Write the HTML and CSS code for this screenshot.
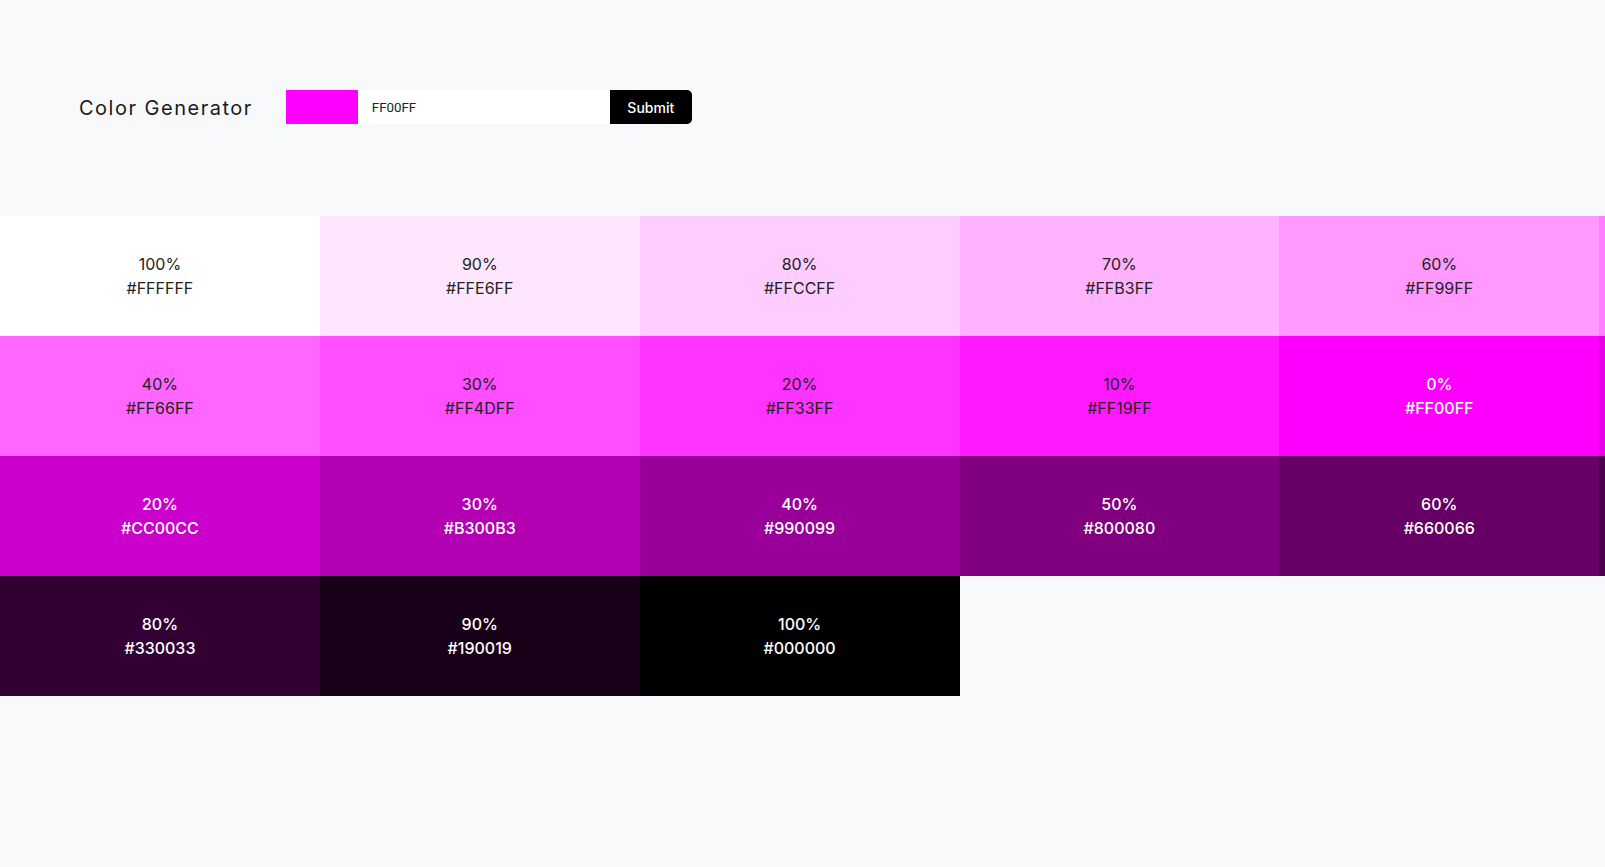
FILE: index.html
```html
<!DOCTYPE html>
<html lang="en">
<head>
<meta charset="utf-8">
<title>Color Generator</title>
<link rel="stylesheet" href="styles.css">
</head>
<body>
<main class="page">
  <section class="generator">
    <h3 class="title">Color Generator</h3>
    <form class="picker">
      <span class="swatch"></span>
      <input class="hex-input" type="text" value="FF00FF">
      <button class="submit" type="button">Submit</button>
    </form>
  </section>
  <section class="colors">
    <article class="color" style="background:#FFFFFF"><p>100%</p><p>#FFFFFF</p></article>
    <article class="color" style="background:#FFE6FF"><p>90%</p><p>#FFE6FF</p></article>
    <article class="color" style="background:#FFCCFF"><p>80%</p><p>#FFCCFF</p></article>
    <article class="color" style="background:#FFB3FF"><p>70%</p><p>#FFB3FF</p></article>
    <article class="color" style="background:#FF99FF"><p>60%</p><p>#FF99FF</p></article>
    <article class="color" style="background:#FF80FF"><p>50%</p><p>#FF80FF</p></article>
    <article class="color" style="background:#FF66FF"><p>40%</p><p>#FF66FF</p></article>
    <article class="color" style="background:#FF4DFF"><p>30%</p><p>#FF4DFF</p></article>
    <article class="color" style="background:#FF33FF"><p>20%</p><p>#FF33FF</p></article>
    <article class="color" style="background:#FF19FF"><p>10%</p><p>#FF19FF</p></article>
    <article class="color light" style="background:#FF00FF"><p>0%</p><p>#FF00FF</p></article>
    <article class="color light" style="background:#E600E6"><p>10%</p><p>#E600E6</p></article>
    <article class="color light" style="background:#CC00CC"><p>20%</p><p>#CC00CC</p></article>
    <article class="color light" style="background:#B300B3"><p>30%</p><p>#B300B3</p></article>
    <article class="color light" style="background:#990099"><p>40%</p><p>#990099</p></article>
    <article class="color light" style="background:#800080"><p>50%</p><p>#800080</p></article>
    <article class="color light" style="background:#660066"><p>60%</p><p>#660066</p></article>
    <article class="color light" style="background:#4D004D"><p>70%</p><p>#4D004D</p></article>
    <article class="color light" style="background:#330033"><p>80%</p><p>#330033</p></article>
    <article class="color light" style="background:#190019"><p>90%</p><p>#190019</p></article>
    <article class="color light" style="background:#000000"><p>100%</p><p>#000000</p></article>
  </section>
</main>
</body>
</html>
```

FILE: styles.css
```css
* {
  box-sizing: border-box;
}

html, body {
  margin: 0;
  padding: 0;
}

body {
  background: #f8f9fb;
  color: #222;
  font-family: "Inter", "Open Sans", sans-serif;
  overflow: hidden;
}

.page {
  width: 100%;
  overflow: hidden;
}

.generator {
  display: flex;
  align-items: flex-start;
  padding: 90px 0 0 79px;
  height: 216px;
}

.title {
  margin: 1px 33px 0 0;
  font-size: 20px;
  font-weight: 400;
  letter-spacing: 1.5px;
  line-height: 34px;
  color: #1a1a1a;
}

.picker {
  display: flex;
  height: 34px;
}

.swatch {
  width: 72px;
  height: 34px;
  background: #ff00ff;
}

.hex-input {
  width: 252px;
  height: 34px;
  border: none;
  outline: none;
  background: #fff;
  padding: 0 14px;
  font-family: "Roboto", sans-serif;
  font-size: 13.33px;
  color: #222;
}

.submit {
  width: 82px;
  height: 34px;
  border: none;
  background: #000;
  color: #fff;
  font-family: "Inter", sans-serif;
  font-size: 14px;
  font-weight: 500;
  border-radius: 0 5px 5px 0;
  padding: 0;
}

.colors {
  display: grid;
  grid-template-columns: repeat(6, 1fr);
  grid-auto-rows: 120px;
  width: 1919px;
}

.color {
  display: flex;
  flex-direction: column;
  align-items: center;
  justify-content: center;
  font-size: 16px;
  line-height: 24px;
  color: #222;
}

.color p {
  margin: 0;
}

.color.light {
  color: #fff;
  font-weight: 500;
}
```
